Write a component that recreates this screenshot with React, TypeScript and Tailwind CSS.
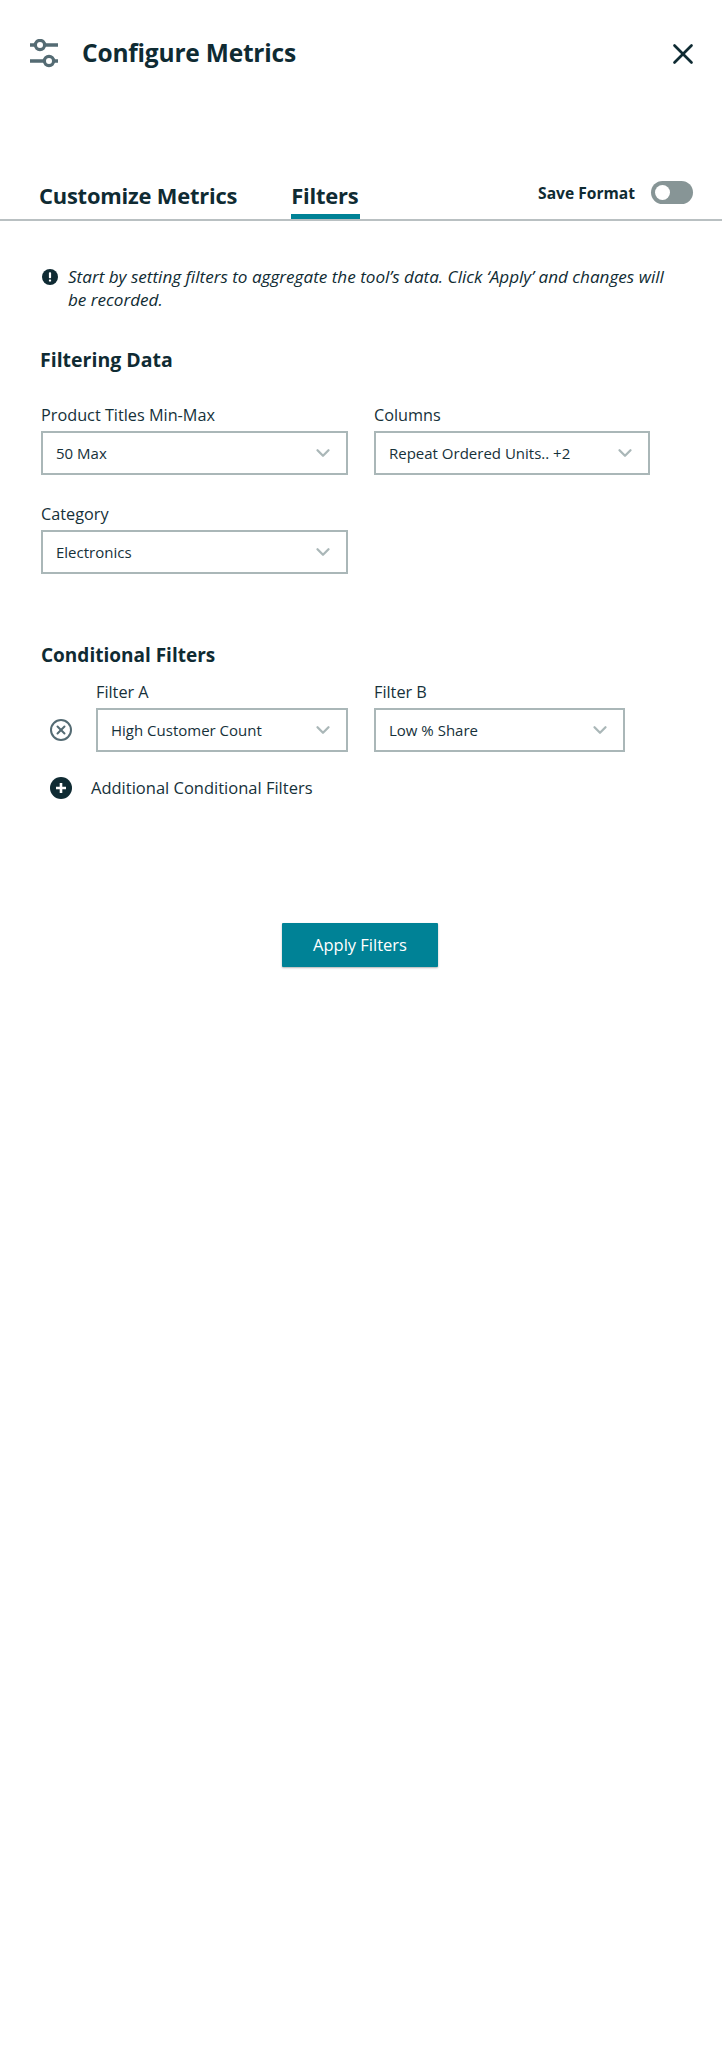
import { ChevronDown, X } from 'lucide-react';

type SelectProps = {
    label: string;
    value: string;
    width: string;
};

/** Labelled dropdown, drawn closed. */
function Select({ label, value, width }: SelectProps) {
    return (
        <div className={width}>
            <div className="pt-[1px] text-[16.25px] leading-[23px] text-[#16313a]">{label}</div>
            <div className="mt-[4px] flex h-[44px] items-center justify-between border-2 border-[#aab7b8] pr-[12px] pl-[13px] text-[15px] text-[#16313a]">
                <span>{value}</span>
                <ChevronDown size={22} strokeWidth={2.5} className="text-[#aab7b8]" />
            </div>
        </div>
    );
}

function SlidersIcon() {
    return (
        <svg width="30" height="30" viewBox="0 0 30 30" fill="none" stroke="#546b73" strokeWidth="3.6">
            <path d="M1 6h5M16 6h13M1 22h14M25 22h4" />
            <circle cx="11" cy="6" r="4.6" strokeWidth="3.2" />
            <circle cx="20" cy="22" r="4.6" strokeWidth="3.2" />
        </svg>
    );
}

export default function App() {
    return (
        <div className="min-h-[2048px] bg-white font-['Open_Sans',sans-serif] text-[#0f2b33]">
            <header className="flex h-[107px] items-center pr-[22px] pl-[29px]">
                <SlidersIcon />
                <h1 className="ml-[23px] flex-1 text-[24.5px] font-bold tracking-[-0.2px]">Configure Metrics</h1>
                <X size={34} strokeWidth={1.9} />
            </header>

            <div className="mt-[65px] flex h-[49px] items-end border-b-2 border-[#b9c0c2] pr-[29px] pl-[39px]">
                <div className="h-[47px] text-[21.9px] leading-[47px] font-bold tracking-[-0.2px]">Customize Metrics</div>
                <div className="ml-[54px] h-[47px] border-b-[5px] border-[#008296] pr-[2px] text-[21.9px] leading-[47px] font-bold tracking-[-0.2px]">
                    Filters
                </div>
                <div className="ml-auto flex h-[47px] items-start gap-[16px] pt-[9px]">
                    <span className="text-[15.6px] leading-[24px] font-bold">Save Format</span>
                    <span className="flex h-[23px] w-[42px] items-center rounded-full bg-[#879596] pl-[4px]">
                        <span className="size-[15px] rounded-full bg-white" />
                    </span>
                </div>
            </div>

            <div className="mt-[44px] flex gap-[10px] pr-[40px] pl-[42px]">
                <svg width="16" height="16" viewBox="0 0 16 16" className="mt-[4px] shrink-0">
                    <circle cx="8" cy="8" r="8" fill="#0f2b33" />
                    <rect x="6.9" y="3.2" width="2.2" height="6" rx="0.8" fill="#fff" />
                    <rect x="6.9" y="10.4" width="2.2" height="2.2" rx="0.6" fill="#fff" />
                </svg>
                <p className="text-[17.1px] leading-[23px] italic">
                    Start by setting filters to aggregate the tool’s data. Click ‘Apply’ and changes will be recorded.
                </p>
            </div>

            <h2 className="mt-[35px] pl-[40px] text-[19.5px] leading-[28px] font-bold">Filtering Data</h2>

            <div className="mt-[29px] flex flex-col gap-[27px] pl-[41px]">
                <div className="flex gap-[26px]">
                    <Select label="Product Titles Min-Max" value="50 Max" width="w-[307px]" />
                    <Select label="Columns" value="Repeat Ordered Units.. +2" width="w-[276px]" />
                </div>
                <Select label="Category" value="Electronics" width="w-[307px]" />
            </div>

            <h2 className="mt-[67px] pl-[41px] text-[19px] leading-[28px] font-bold">Conditional Filters</h2>

            <div className="mt-[11px] flex items-end pl-[50px]">
                <span className="mb-[11px] flex size-[22px] items-center justify-center rounded-full border-[2.5px] border-[#546b73] text-[#546b73]">
                    <X size={14} strokeWidth={3.4} />
                </span>
                <div className="ml-[24px] flex gap-[26px]">
                    <Select label="Filter A" value="High Customer Count" width="w-[252px]" />
                    <Select label="Filter B" value="Low % Share" width="w-[251px]" />
                </div>
            </div>

            <div className="mt-[24px] flex items-center gap-[19px] pl-[50px]">
                <svg width="22" height="22" viewBox="0 0 22 22">
                    <circle cx="11" cy="11" r="11" fill="#0f2b33" />
                    <path d="M11 6v10M6 11h10" stroke="#fff" strokeWidth="2.6" />
                </svg>
                <span className="text-[16.5px] leading-[24px] text-[#16313a]">Additional Conditional Filters</span>
            </div>

            <div className="mt-[123px] flex justify-center pr-[2px]">
                <button className="h-[44px] w-[156px] rounded-[1px] bg-[#008296] text-[16.5px] text-white shadow-[0_1px_2px_rgba(0,0,0,0.3)]">
                    Apply Filters
                </button>
            </div>
        </div>
    );
}
